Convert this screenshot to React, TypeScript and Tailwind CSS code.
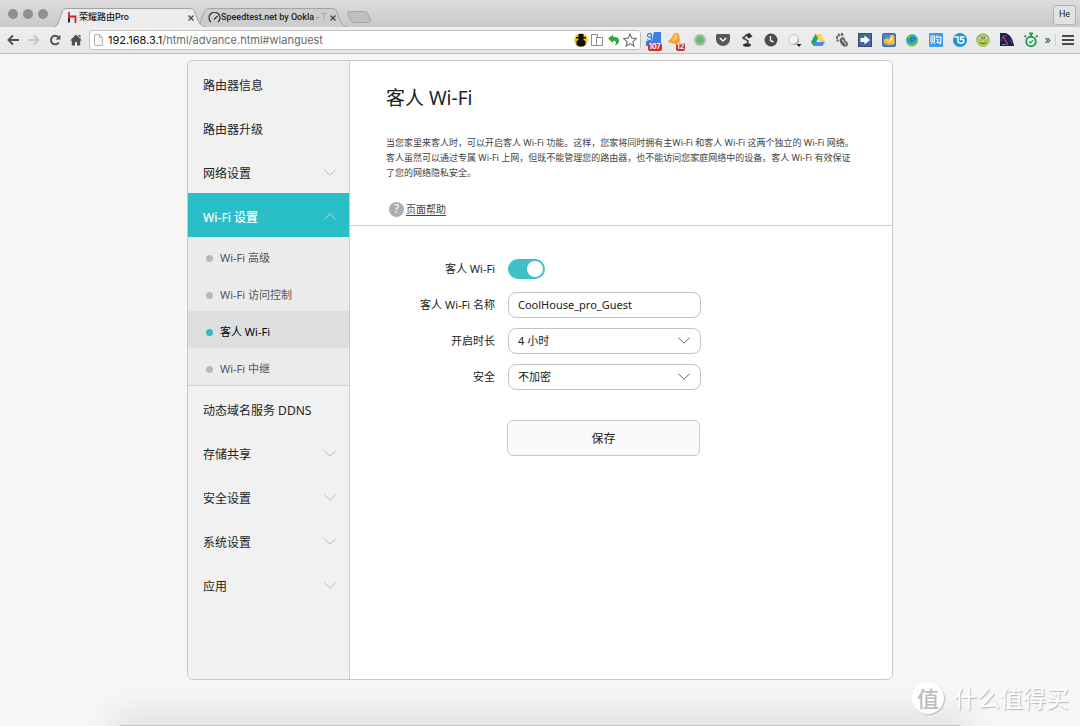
import * as React from "react"
import { useState } from "react"
import clsx from "clsx"

type IconProps = { className?: string }

const navTop = [
  { title: "路由器信息" },
  { title: "路由器升级" },
  { title: "网络设置", expandable: true },
]

const wifiItems = [
  { title: "Wi-Fi 高级", id: "wlanadvance" },
  { title: "Wi-Fi 访问控制", id: "wlanaccess" },
  { title: "客人 Wi-Fi", id: "wlanguest" },
  { title: "Wi-Fi 中继", id: "wlanrepeater" },
]

const navBottom = [
  { title: "动态域名服务 DDNS" },
  { title: "存储共享", expandable: true },
  { title: "安全设置", expandable: true },
  { title: "系统设置", expandable: true },
  { title: "应用", expandable: true },
]

function Chevron({ className, up }: IconProps & { up?: boolean }) {
  return (
    <svg viewBox="0 0 12 7" className={clsx("h-[7px] w-3 shrink-0", className)} fill="none" stroke="currentColor">
      <path d={up ? "M0.5 6.2 6 0.8l5.5 5.4" : "M0.5 0.8 6 6.2l5.5-5.4"} />
    </svg>
  )
}

function TabShape({ fill }: { fill: string }) {
  return (
    <svg viewBox="0 0 150 19" preserveAspectRatio="none" className="absolute inset-0 h-full w-full">
      <path
        d="M0 19C4 18 4 15 5.500 11L8 4C9 1.500 10 .5 13 .5H134c3 0 4 1 5 3.500l2.500 7C143 15 145 18 150 19"
        fill={fill}
        stroke="#a3a3a3"
        vectorEffect="non-scaling-stroke"
      />
    </svg>
  )
}

function TabClose() {
  return (
    <button aria-label="Close tab" className="relative shrink-0">
      <svg viewBox="0 0 6 6" className="h-1.5 w-1.5" stroke="#444" strokeWidth="1.200">
        <path d="M.5.5l5 5M5.500.5l-5 5" />
      </svg>
    </button>
  )
}

function TabBar() {
  return (
    <div className="flex h-[27px] items-end bg-linear-to-b from-[#dcdcdc] to-[#c9c9c9] pr-1 font-['Roboto','Noto_Sans_CJK_SC',sans-serif]">
      <div className="flex gap-[5px] self-center pl-2">
        {[0, 1, 2].map((i) => (
          <span key={i} className="h-[10px] w-[10px] rounded-full bg-[#8f8f94]" />
        ))}
      </div>
      <div className="relative z-10 ml-1.5 flex h-[19px] w-[152px] items-center pr-3 pl-3.5">
        <TabShape fill="#ececec" />
        <svg viewBox="0 0 9 11" className="relative mr-0.5 h-[11px] w-[9px]" fill="none" strokeWidth="1.800">
          <path d="M1 0v10" stroke="#e01b22" />
          <path d="M1 4.500h6.500V11" stroke="#e01b22" />
          <path d="M1 6V10.500" stroke="#222" />
        </svg>
        <span className="relative flex-1 text-[9px] font-medium whitespace-nowrap text-[#222]">荣耀路由Pro</span>
        <TabClose />
      </div>
      <div className="relative -ml-2.5 flex h-[19px] w-[152px] items-center pr-3 pl-3">
        <TabShape fill="#cdcdcd" />
        <svg viewBox="0 0 13 11" className="relative h-[11px] w-[13px]" fill="none" stroke="#333" strokeWidth="1.200">
          <path d="M3 10A5.500 5.500 0 1 1 10 10M6 7.500l3.500-3.500" />
        </svg>
        <span className="relative flex-1 text-[9px] font-medium whitespace-nowrap text-[#222]">
          Speedtest.net by Ookla <span className="text-[#777]">-</span> <span className="text-[#aaa]">T</span>
        </span>
        <TabClose />
      </div>
      <button aria-label="New tab" className="mb-1 -ml-0.5">
        <svg viewBox="0 0 26 12" className="h-3 w-[26px]">
          <path d="M2.500.5h16c2 0 3 1 3.500 2.500l2.500 6c.5 1.500 0 2.500-1.500 2.500H8c-2 0-3-1-3.500-2.500L2 3C1.500 1.500 1.500.5 2.500.5Z" fill="#bfbfbf" stroke="#a6a6a6" />
        </svg>
      </button>
      <button className="mb-0.5 ml-auto h-5 w-[23px] rounded-[3px] border border-[#b4b4b4] bg-[#e2e2e2] text-[9px] text-[#222]">
        He
      </button>
    </div>
  )
}

function Badge({ children }: { children: React.ReactNode }) {
  return (
    <span className="absolute -right-px -bottom-[3px] rounded-[2px] bg-[#c9302f] px-px text-[7px] leading-[8px] font-bold text-white">
      {children}
    </span>
  )
}

// one 16x16 drawing for each extension, in toolbar order
const extensions: { name: string; badge?: string; art: React.ReactNode }[] = [
  {
    name: "Search",
    badge: "107",
    art: (
      <>
        <path d="M1 0h15v14H1z" fill="#3f7de0" />
        <path d="M1 0h8L7 9H1z" fill="#e9f0fc" />
        <circle cx="4.500" cy="3.500" r="2" fill="none" stroke="#3f7de0" strokeWidth="1.300" />
        <path d="M6.500 2v4.500a2 2 0 0 1-4 .5" fill="none" stroke="#3f7de0" strokeWidth="1.300" />
      </>
    ),
  },
  {
    name: "Alerts",
    badge: "12",
    art: (
      <>
        <path d="M6 1.500C7 0 10.500.5 11 3l1 5c0 3-3 4.500-5 4L1 10.500C-.5 9 1 8 2.500 7.500Z" fill="#f5a32c" />
        <path d="M7 2.500c1.500-.5 2 0 2.500 1.500L9 8 4 9Z" fill="#ffc766" />
      </>
    ),
  },
  {
    name: "Status",
    art: (
      <>
        <circle cx="8" cy="8" r="6" fill="#b5b5b8" />
        <circle cx="8" cy="8" r="3.800" fill="#5ac46d" />
      </>
    ),
  },
  {
    name: "Pocket",
    art: (
      <>
        <path d="M2.500 2h11c.8 0 1.500.6 1.500 1.500V7A7 7 0 0 1 1 7V3.500C1 2.600 1.700 2 2.500 2Z" fill="#55575a" />
        <path d="m4.800 6 3.200 3 3.200-3" fill="none" stroke="#fff" strokeWidth="1.500" />
      </>
    ),
  },
  {
    name: "Lamp",
    art: (
      <>
        <path d="M6.500 2.500 10.500 1l3 3.500-4 2Z" fill="#333" />
        <path d="M7.500 3 4.500 6l4.500 3-1 4" fill="none" stroke="#444" strokeWidth="1.600" />
        <ellipse cx="8" cy="13" rx="4" ry="1.800" fill="#333" />
        <circle cx="4.500" cy="6" r="1.400" fill="#555" />
      </>
    ),
  },
  {
    name: "Clock",
    art: (
      <>
        <circle cx="8" cy="8" r="6.500" fill="#4d4d4f" />
        <path d="M7.500 4v4.500l3 1.500" fill="none" stroke="#eee" strokeWidth="1.400" />
      </>
    ),
  },
  {
    name: "Spinner",
    art: (
      <>
        <circle cx="7.500" cy="7.500" r="5" fill="#f3f3f3" stroke="#d5d5d5" strokeWidth="1.500" />
        <path d="M12.500 7A5 5 0 0 1 7 12.500" fill="none" stroke="#aaa" strokeWidth="1.500" />
        <path d="M10.500 12h5L13 15Z" fill="#222" />
      </>
    ),
  },
  {
    name: "Drive",
    art: (
      <>
        <path d="M5.500 2h5L6 10.500 3.500 14 1 10Z" fill="#1fa463" />
        <path d="M5.500 2h5L15 10h-5Z" fill="#ffcf48" />
        <path d="M5.500 10H15l-2.500 4h-9Z" fill="#4688f4" />
      </>
    ),
  },
  {
    name: "Footprint",
    art: (
      <g fill="#666">
        <path d="M6 7c1.500-2.500 5-2 5 .5 0 1.500 3 2 3 4.500 0 2.500-3.500 3.500-5 2S4.500 9.500 6 7Z" />
        <path d="M8 8c2-.5 1 2 2 2.500s2 .5 1.500 2" fill="none" stroke="#ececec" />
        <ellipse cx="3.500" cy="8.500" rx="1.100" ry="1.300" />
        <ellipse cx="3" cy="5.500" rx="1.200" ry="1.400" />
        <ellipse cx="4.800" cy="3" rx="1.300" ry="1.500" />
        <ellipse cx="8" cy="2.500" rx="1.300" ry="1.700" />
      </g>
    ),
  },
  {
    name: "Send",
    art: (
      <>
        <rect x="1.500" y="1.500" width="13" height="13" fill="#45659f" stroke="#34507f" />
        <path d="M3.500 6h4V3.500L13 8l-5.500 4.500V10h-4Z" fill="#fff" />
      </>
    ),
  },
  {
    name: "Gold",
    art: (
      <>
        <rect x="1.500" y="1.500" width="13" height="13" rx="1.500" fill="#4a87d3" stroke="#3767aa" />
        <path d="M3 7.500 6 6l2 1 1-3 3-1.500 1.500 2V12L8 13l-5-2Z" fill="#ffb92e" />
        <path d="m5 8 3 1.500L10 5l1.500-1v4L8 11Z" fill="#ffe489" />
      </>
    ),
  },
  {
    name: "Swirl",
    art: (
      <>
        <circle cx="8" cy="8" r="5.800" fill="#259fd6" />
        <path d="M2.300 9.500c2 2 4 2.500 6 2.300 2.700-.3 4.200-2.300 3.700-4.300 1 0 1.500 0 1.800.5A5.800 5.800 0 0 1 2.300 9.500ZM3 5.500C5 2.500 9.500 3 11 5 8 4 5.500 5 5.500 7.500Z" fill="#6cc13d" />
        <path d="M9 8c-.5 1.500-3 .8-2.500-1S10 5 10.500 7.500" fill="none" stroke="#14608f" />
      </>
    ),
  },
  {
    name: "Shopping",
    art: (
      <>
        <rect x="1" y="1" width="14" height="14" rx="1" fill="#3f9ee8" />
        <path d="M3 10V4h3.500v6M4.800 5.500v3.500L3 12m2-2.500L7 12M9 3.500 8 6m.5-1H13l-.5 6.500H11M8.500 7.500h2l-1.500 3h2.500" fill="none" stroke="#fff" />
      </>
    ),
  },
  {
    name: "Sync",
    art: (
      <>
        <circle cx="8" cy="8" r="7" fill="#1f93d3" />
        <path d="M2.500 5H6v4c0 1.500 1 2 2.500 2M12.500 5H8.500v2.500h3c1 3-1 4-3.500 3.500" fill="none" stroke="#fff" strokeWidth="1.500" />
      </>
    ),
  },
  {
    name: "Smiley",
    art: (
      <>
        <circle cx="8" cy="8" r="6.300" fill="#b4d84c" stroke="#8aa83a" strokeWidth=".8" />
        <circle cx="5.500" cy="6" r="2.100" fill="#fff" stroke="#555" strokeWidth=".5" />
        <circle cx="10.500" cy="6" r="2.100" fill="#fff" stroke="#555" strokeWidth=".5" />
        <circle cx="6" cy="6" r=".8" />
        <circle cx="10" cy="6" r=".8" />
        <path d="M4.500 10.500q3.500 2.500 7 0" fill="none" stroke="#42601a" />
      </>
    ),
  },
  {
    name: "Speed",
    art: (
      <>
        <path d="M1 1h5c5 1 8 6 9 13H1Z" fill="#1b2148" />
        <path d="M2 9c0-3 3-6 6-5M11 7l2 4" fill="none" stroke="#5c6bc0" strokeWidth=".8" />
        <path d="m4 4 5 9" stroke="#e0425c" strokeWidth="1.200" />
        <path d="M3 12.500h4" stroke="#8794d8" strokeWidth=".8" />
      </>
    ),
  },
  {
    name: "Timer",
    art: (
      <>
        <circle cx="8" cy="9.500" r="4.700" fill="#fff" stroke="#1aa251" strokeWidth="2" />
        <path d="M8 1.500v3M6 1.500h4M3 5l-1.500-1.500M13 5l1.500-1.500" stroke="#1aa251" strokeWidth="1.800" />
        <path d="m6 9.500 1.500 1.500L10 8" fill="none" stroke="#1aa251" strokeWidth="1.200" />
      </>
    ),
  },
]

function Toolbar() {
  return (
    <div className="flex h-[27px] items-center border-b border-[#bdbdbd] bg-linear-to-b from-[#efefef] to-[#e6e6e6] pr-1.5 pl-[7px] font-['Inter',sans-serif]">
      <div className="flex gap-[9px]">
        <button aria-label="Back">
          <svg viewBox="0 0 12 12" className="h-3 w-3" fill="none" stroke="#4f4f4f" strokeWidth="1.900">
            <path d="M6 1.500 1.500 6 6 10.500M1.500 6H12" />
          </svg>
        </button>
        <button aria-label="Forward">
          <svg viewBox="0 0 12 12" className="h-3 w-3" fill="none" stroke="#c6c6c6" strokeWidth="1.900">
            <path d="M6 1.500 10.500 6 6 10.500M10.500 6H0" />
          </svg>
        </button>
        <button aria-label="Reload">
          <svg viewBox="0 0 12 12" className="h-3 w-3" fill="none" stroke="#4f4f4f" strokeWidth="1.900">
            <path d="M9.800 8.500A4.300 4.300 0 1 1 9.300 3" />
            <path d="M11.300.8v4.700H6.600Z" fill="#4f4f4f" stroke="none" />
          </svg>
        </button>
        <button aria-label="Home">
          <svg viewBox="0 0 12 12" className="h-3 w-3" fill="#4f4f4f">
            <path d="M6 .5 12 6.500h-1.800V11.500H7V8H5v3.500H1.800V6.500H0L6 .5ZM8.500 1h2v3l-2-2Z" />
          </svg>
        </button>
      </div>

      <div className="ml-[7px] flex h-5 flex-1 items-center gap-1 rounded-[3px] border border-[#c2c2c2] bg-white pr-[3px] pl-1">
        <svg viewBox="0 0 9 12" className="h-3 w-[9px]" fill="#f7f7f7" stroke="#b5b5b5">
          <path d="M.5.5h5l3 3v8h-8ZM5.500.5v3h3" />
        </svg>
        <div className="flex-1 pl-px text-[11px] whitespace-nowrap text-[#6b6b6b]">
          <span className="text-[#111]">192.168.3.1</span>/html/advance.html#wlanguest
        </div>
        <div className="flex items-center gap-[3px]">
          <svg viewBox="0 0 14 14" className="h-3.5 w-3.5">
            <circle cx="7" cy="7" r="6.800" fill="#f4c51d" />
            <path d="M4.500 1h5v3H12v1.500H9.500V7l2 1v4L9 13.500H5L2.500 12V8l2-1V5.500H2V4h2.500Z" fill="#111" />
          </svg>
          <svg viewBox="0 0 13 12" className="h-3 w-[13px]" fill="#fff" stroke="#8c8c8c">
            <path d="M.5.5h6v11h-6Z" />
            <path d="M5.500 3.500h6v8h-6Z" />
          </svg>
          <svg viewBox="0 0 13 12" className="h-3 w-[13px]">
            <path d="M1 4.500 6 .5v2.300c5 0 6.500 2.500 6 4.700-.4 2-2 3.500-4.500 4 2-1.500 3-4.500-1.500-4.700V9Z" fill="#36a63a" />
          </svg>
          <svg viewBox="0 0 14 14" className="h-3.5 w-3.5" fill="#fff" stroke="#777" strokeWidth="1.200">
            <path d="m7 1 1.800 4.200 4.500.4-3.400 3 1 4.400L7 10.700 3.100 13l1-4.400-3.400-3 4.500-.4Z" />
          </svg>
        </div>
      </div>

      <div className="ml-1 flex w-[394px] justify-between">
        {extensions.map((ext) => (
          <button key={ext.name} aria-label={ext.name} className="relative h-4 w-4">
            <svg viewBox="0 0 16 16" className="h-4 w-4">
              {ext.art}
            </svg>
            {ext.badge && <Badge>{ext.badge}</Badge>}
          </button>
        ))}
      </div>
      <button className="ml-1.5 border-r border-[#d4d4d4] pr-1 text-[11px] leading-3 text-[#333]">»</button>
      <button aria-label="Menu" className="ml-1.5">
        <svg viewBox="0 0 12 10" className="h-[10px] w-3" stroke="#4a4a4a" strokeWidth="2">
          <path d="M0 1h12M0 5h12M0 9h12" />
        </svg>
      </button>
    </div>
  )
}

function NavItem({ title, expandable, active }: { title: string; expandable?: boolean; active?: boolean }) {
  return (
    <a
      href="#"
      className={clsx(
        "flex h-11 items-center justify-between pt-1.5 pr-[13px] pl-[15px] text-[12px]",
        active ? "bg-[#2abfc7] font-medium text-white" : "text-[#222]"
      )}
    >
      {title}
      {expandable && <Chevron up={active} className={clsx("mb-1", active ? "text-[#a4e5e9]" : "text-[#b9b9b9]")} />}
    </a>
  )
}

function Sidebar() {
  return (
    <nav className="w-[162px] shrink-0 border-r border-[#cccccc] bg-[#f1f1f1]">
      {navTop.map((item) => (
        <NavItem key={item.title} {...item} />
      ))}
      <NavItem title="Wi-Fi 设置" expandable active />
      <ul className="border-b border-[#cfcfcf] bg-[#ebebeb]">
        {wifiItems.map((item) => {
          const isActive = item.id === "wlanguest"
          return (
            <li key={item.id}>
              <a
                href={`#${item.id}`}
                className={clsx(
                  "flex h-[37px] items-center gap-[7px] pt-1.5 pl-[18px] text-[11px]",
                  isActive ? "bg-[#dedede] text-black" : "text-[#555]"
                )}
              >
                <span className={clsx("h-[7px] w-[7px] rounded-full", isActive ? "bg-[#2abfc7]" : "bg-[#b9b9b9]")} />
                {item.title}
              </a>
            </li>
          )
        })}
      </ul>
      {navBottom.map((item) => (
        <NavItem key={item.title} {...item} />
      ))}
    </nav>
  )
}

function Row({ label, htmlFor, children }: { label: string; htmlFor: string; children: React.ReactNode }) {
  return (
    <div className="flex h-[26px] items-center gap-[13px]">
      <label htmlFor={htmlFor} className="w-[145px] text-right text-[11px] text-[#222]">
        {label}
      </label>
      {children}
    </div>
  )
}

function SelectBox({ id, options }: { id: string; options: string[] }) {
  return (
    <div className="relative w-[193px]">
      <select id={id} className="block h-[26px] w-full appearance-none rounded-lg border border-[#c4c4c4] bg-white px-[9px] text-[11px] text-[#222]">
        {options.map((o) => (
          <option key={o}>{o}</option>
        ))}
      </select>
      <Chevron className="pointer-events-none absolute top-[9px] right-[11px] text-[#666]" />
    </div>
  )
}

function GuestWifi() {
  const [enabled, setEnabled] = useState(true)
  const [name, setName] = useState("CoolHouse_pro_Guest")

  return (
    <main className="min-w-0 flex-1 bg-white">
      <header className="border-b border-[#cfcfcf] pb-2 pl-9">
        <h1 className="pt-6 text-[19px] leading-[26px] text-[#222]">客人 Wi-Fi</h1>
        <p className="mt-6 max-w-[470px] text-[9px] leading-[15px] text-[#444]">
          当您家里来客人时，可以开启客人 Wi-Fi 功能。这样，您家将同时拥有主Wi-Fi 和客人 Wi-Fi 这两个独立的 Wi-Fi
          网络。客人虽然可以通过专属 Wi-Fi 上网，但既不能管理您的路由器，也不能访问您家庭网络中的设备。客人 Wi-Fi
          有效保证了您的网络隐私安全。
        </p>
        <a href="#help" className="mt-[21px] ml-[3px] flex w-fit items-center gap-0.5 text-[10px] leading-4 text-[#444]">
          <span className="flex h-[15px] w-[15px] items-center justify-center rounded-full bg-[#adadad] text-[12px] text-white">
            ?
          </span>
          <span className="underline underline-offset-2">页面帮助</span>
        </a>
      </header>

      <form className="flex flex-col gap-[10px] pt-[30px]" onSubmit={(e) => e.preventDefault()}>
        <Row label="客人 Wi-Fi" htmlFor="guest-on">
          <input
            id="guest-on"
            type="checkbox"
            role="switch"
            checked={enabled}
            onChange={(e) => setEnabled(e.target.checked)}
            className="flex h-5 w-[37px] appearance-none items-center rounded-full bg-[#bbb] px-0.5 before:h-4 before:w-4 before:rounded-full before:bg-white checked:justify-end checked:bg-[#3fbfc6]"
          />
        </Row>
        <Row label="客人 Wi-Fi 名称" htmlFor="guest-name">
          <input
            id="guest-name"
            type="text"
            value={name}
            onChange={(e) => setName(e.target.value)}
            className="h-[26px] w-[193px] rounded-lg border border-[#c4c4c4] bg-white px-[9px] pb-0.5 text-[11px] text-[#222]"
          />
        </Row>
        <Row label="开启时长" htmlFor="guest-time">
          <SelectBox id="guest-time" options={["4 小时", "1 天", "不限制"]} />
        </Row>
        <Row label="安全" htmlFor="guest-security">
          <SelectBox id="guest-security" options={["不加密", "加密"]} />
        </Row>
        <button
          type="submit"
          className="mt-5 ml-[157px] h-9 w-[193px] rounded-md border border-[#c8c8c8] bg-[#fafafa] pt-0.5 text-[12px] text-[#222]"
        >
          保存
        </button>
      </form>
    </main>
  )
}

export default function App() {
  return (
    <div className="relative flex min-h-screen flex-col overflow-hidden bg-[#f6f6f6] font-['Noto_Sans','Noto_Sans_CJK_SC',sans-serif]">
      <TabBar />
      <Toolbar />

      <div className="mx-auto mt-1.5 flex min-h-[620px] w-full max-w-[706px] overflow-hidden rounded-md border border-[#c8c8c8]">
        <Sidebar />
        <GuestWifi />
      </div>

      {/* dock edge */}
      <div className="pointer-events-none absolute right-[120px] bottom-0 left-[120px] h-px bg-[#c4c4c4] shadow-[0_0_30px_8px_rgba(0,0,0,0.14)]" />

      <div className="pointer-events-none absolute right-[11px] bottom-3 flex items-center gap-2.5 text-white">
        <span className="flex h-8 w-8 items-center justify-center rounded-full bg-white text-[22px] font-medium text-[#bdbdbd] shadow-[1px_1px_1px_#bdbdbd]">
          值
        </span>
        <span className="text-[23px] leading-8 [text-shadow:1px_1px_1px_#b5b5b5]">什么值得买</span>
      </div>
    </div>
  )
}
